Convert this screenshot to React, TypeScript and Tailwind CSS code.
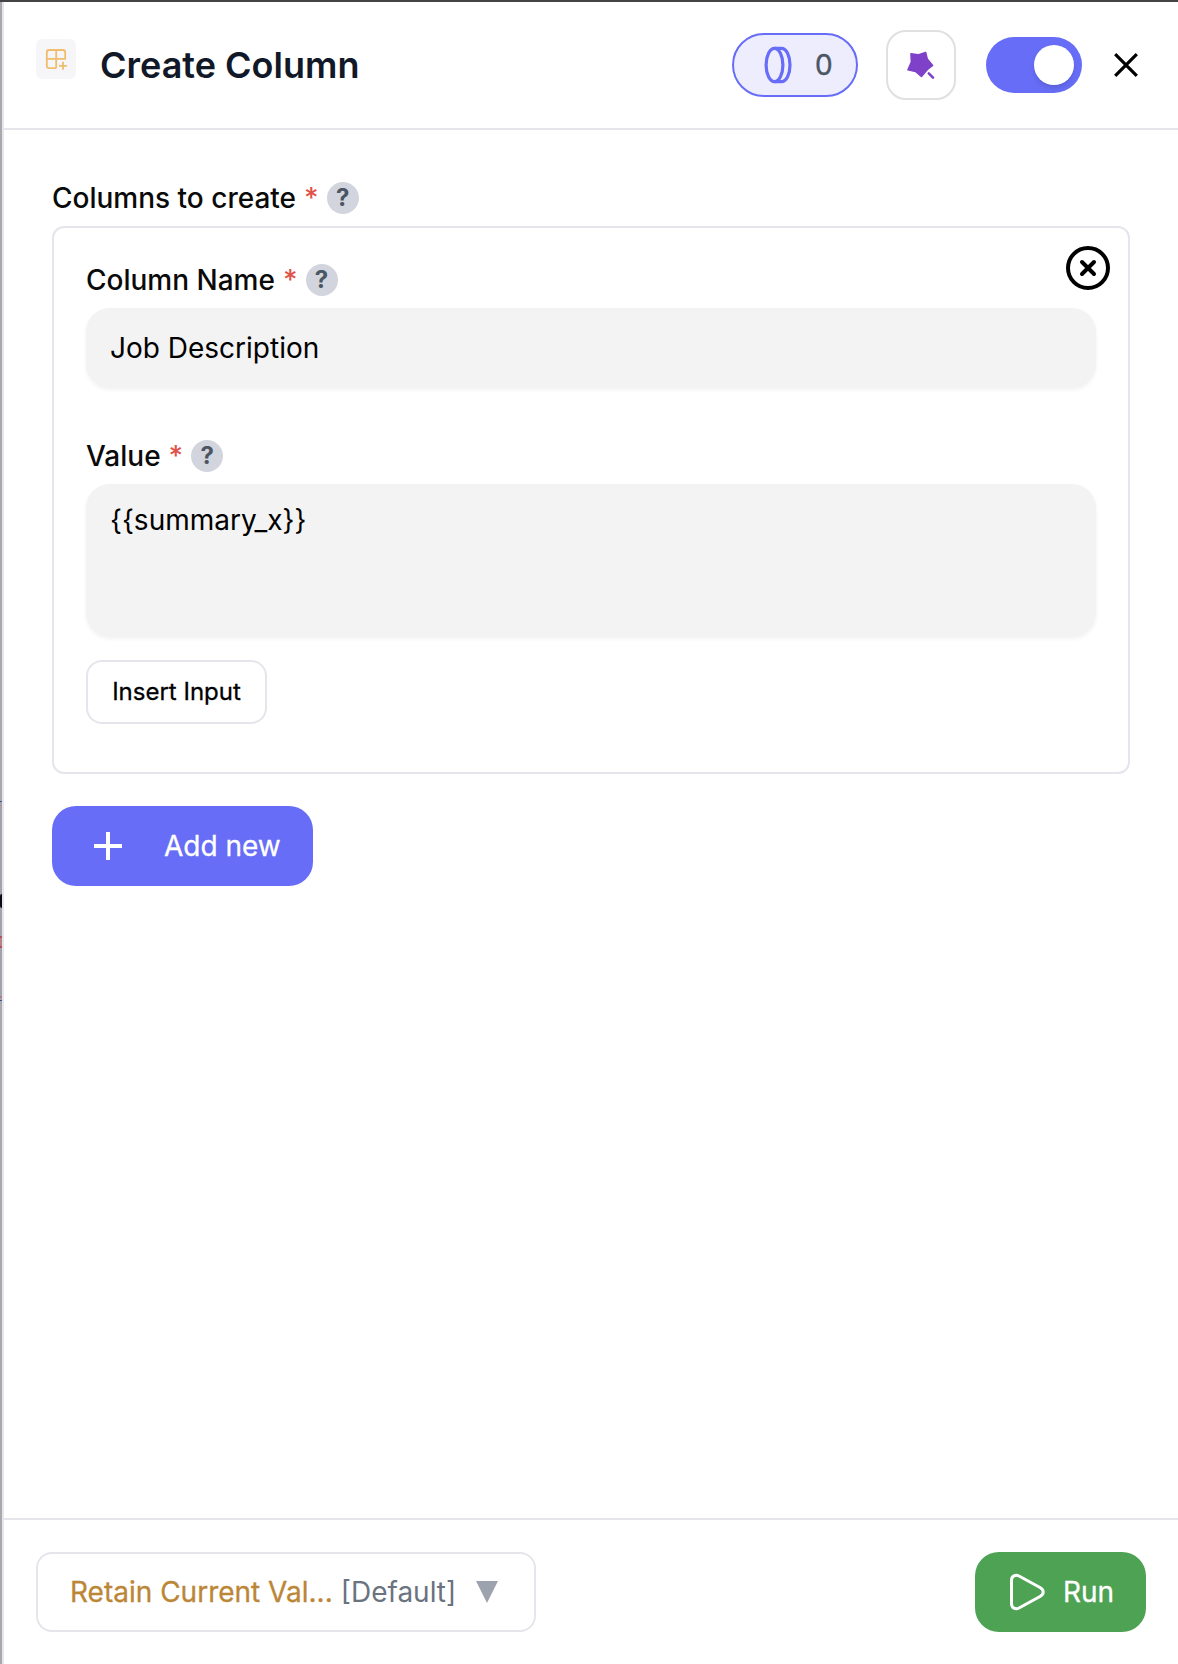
import { useState } from "react";

function CoinIcon() {
  return (
    <svg width="40" height="40" viewBox="0 0 40 40" fill="none" stroke="#676df6" strokeWidth="3.2">
      <ellipse cx="16.5" cy="20" rx="8.4" ry="16.7" />
      <path d="M16.5 3.3H23.5C28.4 3.3 32 10.7 32 20S28.4 36.7 23.5 36.7H16.5" />
    </svg>
  );
}

function WandIcon() {
  return (
    <svg width="32" height="32" viewBox="0 0 32 32" fill="#7e41c8" stroke="#7e41c8" strokeLinejoin="round" strokeLinecap="round">
      <path d="M6 4.8L13 5.9L20.6 3.4L22.2 10L27.6 16.4L22.4 20.4L16.4 27.4L10.6 22.4L3 20.8L6.4 13Z" strokeWidth="1.6" />
      <path d="M23.8 24.4L28 28.6" strokeWidth="2.6" />
    </svg>
  );
}

function GridIcon() {
  return (
    <svg width="24" height="24" viewBox="0 0 24 24" fill="none" stroke="#f0bd6c" strokeWidth="1.8">
      <path d="M12.2 21.2H5.2Q2.8 21.2 2.8 18.8V5.4Q2.8 3 5.2 3H18.8Q21.2 3 21.2 5.4V11.8H2.8M12.2 3V21.2" />
      <path d="M15 18.8H23M19 14.8V22.8" />
    </svg>
  );
}

function Label({ text }: { text: string }) {
  return (
    <div className="flex items-center h-8 text-[28px] font-medium text-[#0a0a0a] whitespace-nowrap">
      <span>{text}</span>
      <span className="ml-2 text-[#e0524a]">*</span>
      <span className="ml-2 w-8 h-8 rounded-full bg-[#d2d5dd] text-[#4b5563] text-2xl font-bold flex items-center justify-center">?</span>
    </div>
  );
}

export default function App() {
  const [enabled, setEnabled] = useState(true);
  const [name, setName] = useState("Job Description");
  const [value, setValue] = useState("{{summary_x}}");

  return (
    <div className="relative w-[1178px] h-[1664px] flex flex-col bg-white overflow-hidden border-t-2 border-[#444444] font-['Inter',sans-serif] text-black">
      {/* edge of the canvas behind the panel */}
      <div className="absolute left-0 top-0 w-0.5 h-full bg-[#a9a9ab]">
        <div className="absolute top-[799px] w-0.5 h-[200px] bg-[#a0a3ab] border-y border-[#3850a0]" />
        <div className="absolute top-[803px] w-0.5 h-px bg-[#b88e85]" />
        <div className="absolute top-[892px] w-0.5 h-3.5 rounded-l-full bg-[#0a0a14]" />
        <div className="absolute top-[934px] w-0.5 h-3 border-y-2 border-[#b05058] bg-[#b88088]" />
        <div className="absolute top-[994px] w-0.5 h-0.5 bg-[#b07c88]" />
      </div>

      <div className="flex-1 ml-0.5 flex flex-col border-l-2 border-[#e5e5eb]">
        <header className="h-32 shrink-0 border-b-2 border-[#e5e5eb] flex items-center pl-8 pr-10">
          <div className="w-10 h-10 mb-3 rounded-md bg-[#f6f6f9] flex items-center justify-center">
            <GridIcon />
          </div>
          <h1 className="ml-6 text-4xl font-semibold text-[#111827]">Create Column</h1>
          <div className="ml-auto w-[126px] h-16 rounded-full border-2 border-[#676df6] bg-[#eeedfd] flex items-center pl-6">
            <CoinIcon />
            <span className="ml-[17px] text-[28px] text-[#4b5563] [-webkit-text-stroke:0.4px_#4b5563]">0</span>
          </div>
          <button className="ml-7 w-[70px] h-[70px] rounded-[20px] border-2 border-[#e0e0e3] flex items-center justify-center">
            <WandIcon />
          </button>
          <button onClick={() => setEnabled(!enabled)} className={enabled ? "ml-[30px] w-24 h-14 rounded-full bg-[#676df6] p-2 flex justify-end" : "ml-[30px] w-24 h-14 rounded-full bg-gray-300 p-2 flex"}>
            <span className="w-10 h-10 rounded-full bg-white shadow-md" />
          </button>
          <button className="ml-8">
            <svg width="24" height="24" viewBox="0 0 24 24" fill="none" stroke="black" strokeWidth="3.2">
              <path d="M1.2 1.2L22.8 22.8M22.8 1.2L1.2 22.8" />
            </svg>
          </button>
        </header>

        <main className="flex-1 pl-12 pr-12 pt-[52px]">
          <Label text="Columns to create" />
          <div className="relative mt-3 w-[1078px] h-[548px] rounded-xl border-2 border-[#e5e5eb] px-8 pt-9">
            <button className="absolute right-[18px] top-[18px]">
              <svg width="44" height="44" viewBox="0 0 44 44" fill="none" stroke="black" strokeWidth="4" strokeLinecap="round">
                <circle cx="22" cy="22" r="20" />
                <path d="M16 16L28 28M28 16L16 28" />
              </svg>
            </button>
            <Label text="Column Name" />
            <input value={name} onChange={e => setName(e.target.value)} className="block mt-3 w-full h-20 rounded-3xl bg-[#f3f3f3] px-6 text-[28px] shadow-[0_2px_4px_rgba(0,0,0,0.05)]" />
            <div className="mt-[52px]">
              <Label text="Value" />
            </div>
            <textarea value={value} onChange={e => setValue(e.target.value)} className="block mt-3 w-full h-[153px] rounded-3xl bg-[#f3f3f3] px-6 py-4 text-[28px] leading-10 shadow-[0_2px_4px_rgba(0,0,0,0.05)] resize-none" />
            <button className="mt-[23px] w-[181px] h-16 rounded-2xl border-2 border-[#e5e5eb] text-2xl [-webkit-text-stroke:0.3px_black]">Insert Input</button>
          </div>
          <button className="mt-8 w-[261px] h-20 rounded-3xl bg-[#676df6] text-white text-[28px] flex items-center pl-[42px]">
            <svg width="28" height="28" viewBox="0 0 28 28" stroke="white" strokeWidth="4">
              <path d="M14 0V28M0 14H28" />
            </svg>
            <span className="ml-[42px] [-webkit-text-stroke:0.3px_white]">Add new</span>
          </button>
        </main>

        <footer className="h-[146px] shrink-0 border-t-2 border-[#e5e5eb] flex items-start justify-between pl-8 pr-8 pt-8">
          <button className="w-[500px] h-20 rounded-2xl border-2 border-[#e5e5eb] flex items-center pl-8 text-[28px] whitespace-nowrap">
            <span className="text-[#bb8636] [-webkit-text-stroke:0.3px_#bb8636]">Retain Current Val...</span>
            <span className="ml-2 text-[#6b7280]">[Default]</span>
            <svg className="ml-5" width="22" height="22" viewBox="0 0 22 22" fill="#9ca3af">
              <path d="M0 0H22L11 22Z" />
            </svg>
          </button>
          <button className="w-[171px] h-20 rounded-3xl bg-[#4da254] text-white text-[28px] flex items-center pl-[34px]">
            <svg width="36" height="38" viewBox="0 0 36 38" fill="none" stroke="white" strokeWidth="3" strokeLinejoin="round">
              <path d="M2.5 7.5C2.5 3 6.5 1.2 10 3L31 14.5C35.3 17 35.3 21 31 23.5L10 35C6.5 36.8 2.5 35 2.5 30.5Z" />
            </svg>
            <span className="ml-[18px] [-webkit-text-stroke:0.3px_white]">Run</span>
          </button>
        </footer>
      </div>
    </div>
  );
}
